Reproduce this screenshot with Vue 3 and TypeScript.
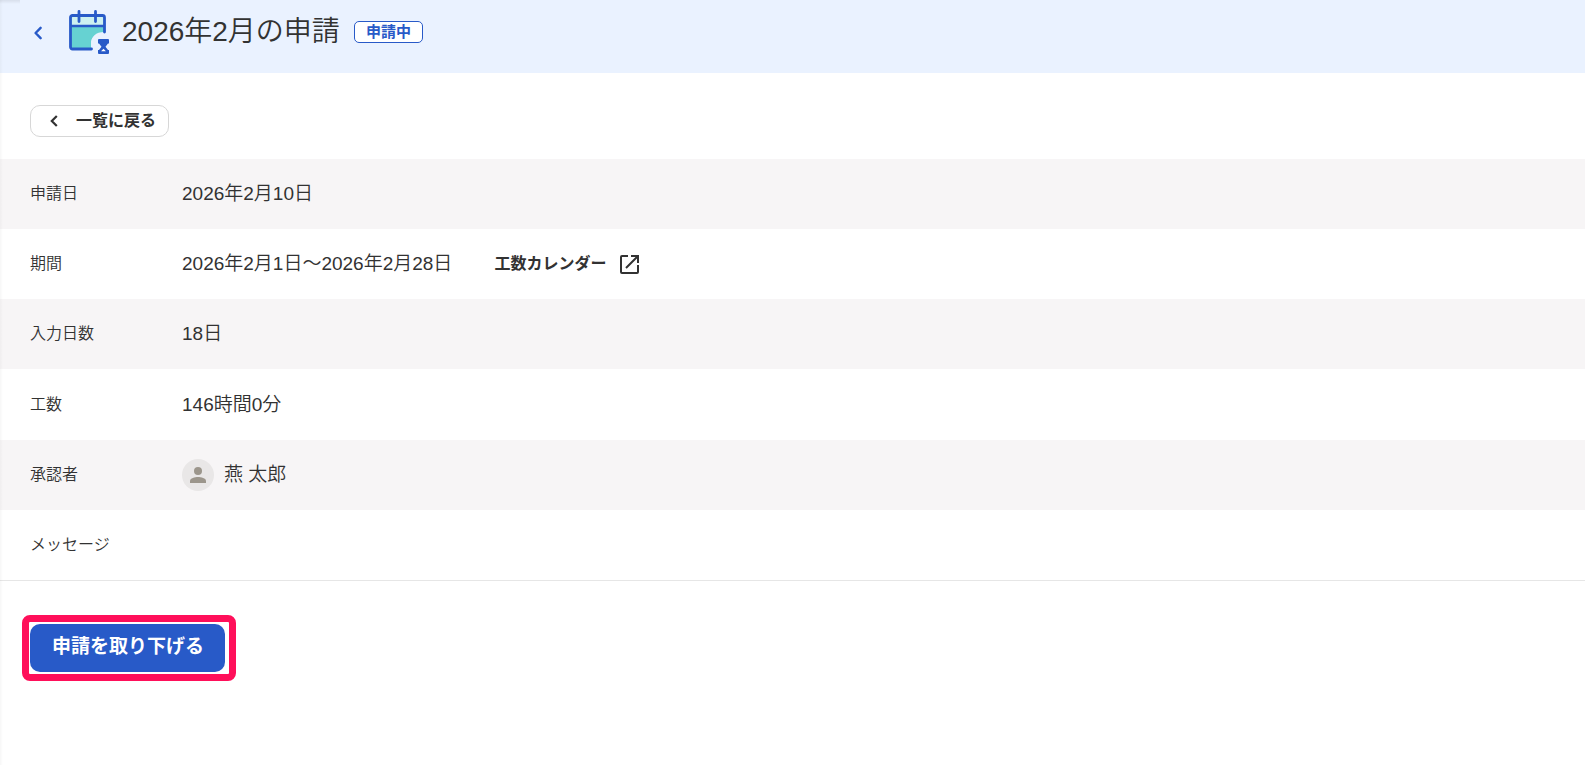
<script setup lang="ts">
interface DetailRow {
  label: string
  value: string
  kind?: 'period' | 'person'
}

const rows: DetailRow[] = [
  { label: '申請日', value: '2026年2月10日' },
  { label: '期間', value: '2026年2月1日～2026年2月28日', kind: 'period' },
  { label: '入力日数', value: '18日' },
  { label: '工数', value: '146時間0分' },
  { label: '承認者', value: '燕 太郎', kind: 'person' },
  { label: 'メッセージ', value: '' },
]
</script>

<template>
  <div class="page">
    <header class="head">
      <a class="head-back" href="#" aria-label="戻る">
        <svg width="8" height="14" viewBox="0 0 8 14" fill="none" stroke="#285ac8" stroke-width="2.4" stroke-linecap="round" stroke-linejoin="round"><path d="M6.600 1.800 1.600 7l5 5.200" /></svg>
      </a>
      <svg class="head-icon" width="42" height="46" viewBox="0 0 42 46" aria-hidden="true">
        <path d="M3 7h33v10H3z" fill="#cdf1f1" />
        <path d="M3 17h33v7c-8 0-13 4-13 11v5H3z" fill="#66d2d2" />
        <path d="M36 23c-8 0-13 4.500-13 12v4h5V28h8z" fill="#eaf2ff" />
        <path d="M2 17h34" stroke="#285ac8" stroke-width="2.500" />
        <path d="M23.500 40H4.500a2 2 0 0 1-2-2V8.500a2 2 0 0 1 2-2h30a2 2 0 0 1 2 2V23" fill="none" stroke="#285ac8" stroke-width="2.800" stroke-linecap="round" />
        <path d="M11 2.500v10M27.500 2.500v10" stroke="#285ac8" stroke-width="2.800" stroke-linecap="round" />
        <path d="M31 30h9a1 1 0 0 1 1 1v3.500h-1l-2.500 3.300 2.500 3.200h1v3a1 1 0 0 1-1 1h-9a1 1 0 0 1-1-1v-3h1l2.500-3.200-2.500-3.300h-1v-3.500a1 1 0 0 1 1-1z" fill="#285ac8" />
        <path d="M35.500 39.800l2.400 2.400h-4.800z" fill="#fff" />
      </svg>
      <h1>2026年2月の申請</h1>
      <span class="badge">申請中</span>
    </header>

    <main>
      <div class="toolbar">
        <button type="button" class="list-back">
          <svg width="8" height="12" viewBox="0 0 8 12" fill="none" stroke="#323232" stroke-width="2.200" aria-hidden="true"><path d="M6.800 1 1.800 6l5 5" /></svg>
          <span>一覧に戻る</span>
        </button>
      </div>

      <table class="details">
        <tbody>
          <tr v-for="row in rows" :key="row.label">
            <th scope="row">{{ row.label }}</th>
            <td>
              <div class="cell">
                <svg v-if="row.kind === 'person'" class="avatar" width="32" height="32" viewBox="0 0 32 32" aria-hidden="true">
                  <circle cx="16" cy="16" r="16" fill="#e9e7e7" />
                  <circle cx="16" cy="12" r="4" fill="#9c968c" />
                  <path d="M8 24v-2.200C8 19.200 13 18 16 18s8 1.200 8 3.800V24z" fill="#9c968c" />
                </svg>
                <span>{{ row.value }}</span>
                <a v-if="row.kind === 'period'" class="calendar" href="#">
                  <span>工数カレンダー</span>
                  <svg width="20" height="20" viewBox="0 0 20 20" fill="none" stroke="#323232" stroke-width="2" aria-hidden="true">
                    <path d="M9 2H3a1 1 0 0 0-1 1v15a1 1 0 0 0 1 1h15a1 1 0 0 0 1-1v-7M12 2h7v7M19 2 7 14" />
                  </svg>
                </a>
              </div>
            </td>
          </tr>
        </tbody>
      </table>

      <div class="actions">
        <div class="highlight">
          <button type="button" class="withdraw">申請を取り下げる</button>
        </div>
      </div>
    </main>
  </div>
</template>

<style>
body {
  margin: 0;
  background: #fff;
}
</style>

<style scoped>
.page {
  min-height: 100vh;
  box-sizing: border-box;
  position: relative;
  color: #323232;
  font-family: "Liberation Sans", "Noto Sans CJK JP", sans-serif;
  font-weight: 350;
}
.page::before {
  content: "";
  position: absolute;
  inset: 0 auto 0 0;
  width: 3px;
  background: linear-gradient(to right, rgba(0, 0, 0, 0.03), rgba(0, 0, 0, 0));
}
.page::after {
  content: "";
  position: absolute;
  top: 0;
  left: 0;
  width: 20px;
  height: 4px;
  background: linear-gradient(rgba(0, 0, 0, 0.08), rgba(0, 0, 0, 0));
}
.head {
  display: flex;
  align-items: center;
  height: 73px;
  box-sizing: border-box;
  padding: 0 32px 10px;
  background: #eaf2ff;
}
.head-back {
  display: flex;
  margin: 2px 26px 0 2px;
}
h1 {
  margin: 0 14px 0 12px;
  font-size: 28px;
  font-weight: 350;
  line-height: 40px;
}
.badge {
  box-sizing: border-box;
  height: 22px;
  padding: 0 11px;
  border: 1px solid #285ac8;
  border-radius: 5px;
  background: #fff;
  color: #285ac8;
  font-size: 15px;
  font-weight: 700;
  line-height: 19px;
}
.toolbar {
  padding: 32px 30px 22px;
}
.list-back {
  display: flex;
  align-items: center;
  gap: 18px;
  height: 32px;
  padding: 0 12px 0 19px;
  border: 1px solid #d7d7d7;
  border-radius: 10px;
  background: #fff;
  color: inherit;
  font: 700 16px/28px "Liberation Sans", "Noto Sans CJK JP", sans-serif;
}
.details {
  width: 100%;
  height: 422px;
  border-collapse: separate;
  border-spacing: 0;
  border-bottom: 1px solid #e6e6e6;
}
.details tr {
  height: 70px;
}
.details tr:nth-child(odd) {
  background: #f7f5f6;
}
.details th {
  width: 182px;
  box-sizing: border-box;
  padding: 0 0 0 30px;
  text-align: left;
  font-size: 16px;
  font-weight: 350;
  line-height: 24px;
}
.details td {
  padding: 0;
  font-size: 19px;
  line-height: 28px;
}
.cell {
  display: flex;
  align-items: center;
}
.avatar {
  margin-right: 10px;
}
.calendar {
  display: flex;
  align-items: center;
  gap: 13px;
  margin-left: 42px;
  color: inherit;
  font-size: 16px;
  font-weight: 700;
  text-decoration: none;
}
.actions {
  display: flex;
  padding: 34px 22px;
}
.highlight {
  padding: 2px 4px 2px 1px;
  border: 7px solid #ff0f5a;
  border-radius: 8px;
}
.withdraw {
  display: block;
  height: 48px;
  padding: 0 21px 2px 22px;
  border: 0;
  border-radius: 10px;
  background: #285ac8;
  color: #fff;
  font: 700 19px/28px "Liberation Sans", "Noto Sans CJK JP", sans-serif;
}
</style>
